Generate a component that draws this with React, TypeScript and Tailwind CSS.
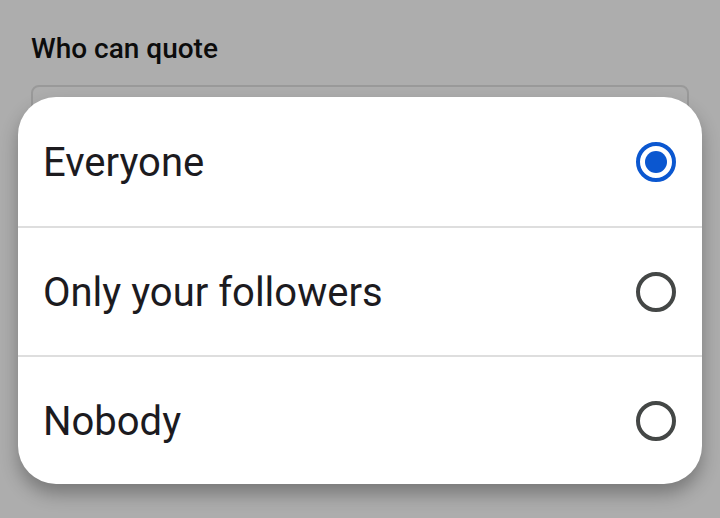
import React from "react";

const options = [
  { label: "Everyone", selected: true },
  { label: "Only your followers", selected: false },
  { label: "Nobody", selected: false },
];

function Radio({ selected }: { selected: boolean }) {
  return selected ? (
    <div className="w-[40px] h-[40px] rounded-full border-[4px] border-[#0b57d0] flex items-center justify-center">
      <div className="w-[22px] h-[22px] rounded-full bg-[#0b57d0]" />
    </div>
  ) : (
    <div className="w-[40px] h-[40px] rounded-full border-[4px] border-[#444746]" />
  );
}

export default function App() {
  return (
    <div
      className="relative w-[720px] h-[518px] overflow-hidden bg-[#adadad]"
      style={{ fontFamily: "Roboto, 'Noto Sans', sans-serif" }}
    >
      <div className="px-[31px] pt-[31px]">
        <div className="text-[28px] leading-[36px] font-medium text-[#0c0c0c]">Who can quote</div>
        <div className="mt-[18px] h-[200px] rounded-[8px] border-[2px] border-[#999999]" />
      </div>

      <div className="absolute left-[18px] top-[97px] w-[684px] rounded-[38px] bg-white shadow-[0_10px_18px_rgba(0,0,0,0.3)] overflow-hidden">
        {options.map((o, i) => (
          <div
            key={o.label}
            className={
              "h-[129px] flex items-center justify-between pl-[25px] pr-[26px]" +
              (i > 0 ? " border-t-[2px] border-[#dedede]" : "")
            }
          >
            <span className="text-[40px] text-[#1c1b1f] leading-none pt-[2px]">{o.label}</span>
            <Radio selected={o.selected} />
          </div>
        ))}
      </div>
    </div>
  );
}
